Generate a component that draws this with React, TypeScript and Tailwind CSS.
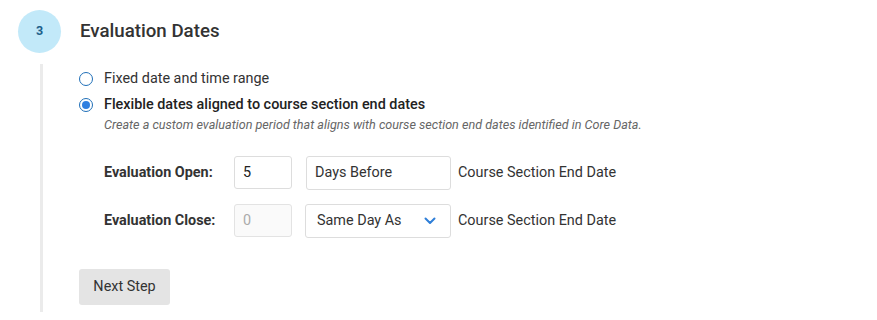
import type { FC } from 'react';

const Chevron: FC = () => (
  <svg width="12" height="8" viewBox="0 0 12 8" fill="none">
    <path d="M1.5 1.5 6 6l4.5-4.5" stroke="#2f7fd8" strokeWidth="2" strokeLinecap="round" strokeLinejoin="round" />
  </svg>
);

const Radio: FC<{ checked?: boolean }> = ({ checked }) => (
  <span className="flex size-[14px] shrink-0 items-center justify-center rounded-full border border-[#1f6fb8] bg-white">
    {checked && <span className="size-[8px] rounded-full bg-[#2f7fe0]" />}
  </span>
);

export default function App() {
  return (
    <div className="h-[320px] w-[877px] bg-white font-['Roboto',sans-serif] text-[#333]">
      <div className="flex items-center pt-[10px]">
        <div className="ml-[18px] flex size-[43px] items-center justify-center rounded-full bg-[#c2e9f9] text-[12.5px] font-bold text-[#1d5f8a]">
          3
        </div>
        <h2 className="ml-[19px] text-[18.7px] font-medium text-[#333]">Evaluation Dates</h2>
      </div>

      <div className="ml-[40px] mt-[11px] flex h-[248px] border-l-[3px] border-[#ebebeb]">
        <div className="flex flex-col pl-[36px] pt-[2px]">
          <label className="flex h-[26px] items-center gap-[11px] text-[14.4px] text-[#333]">
            <Radio />
            Fixed date and time range
          </label>
          <label className="flex h-[26px] items-center gap-[11px] text-[14.4px] font-medium text-[#222]">
            <Radio checked />
            Flexible dates aligned to course section end dates
          </label>
          <p className="ml-[25px] -mt-[2px] text-[12.6px] italic text-[#666]">
            Create a custom evaluation period that aligns with course section end dates identified in Core Data.
          </p>

          <div className="ml-[25px] mt-[21px] grid grid-cols-[130px_72px_152px_auto] items-center gap-y-[14px] text-[14.4px]">
            <span className="font-bold text-[#333]">Evaluation Open:</span>
            <input
              readOnly
              value="5"
              className="h-[33px] w-[58px] rounded-[3px] border border-[#ddd] px-[8px] text-[14.4px] text-[#222] outline-none"
            />
            <div className="flex h-[34px] w-[145px] items-center rounded-[3px] border border-[#ddd] px-[8px] text-[#333]">
              Days Before
            </div>
            <span className="text-[#333]">Course Section End Date</span>

            <span className="font-bold text-[#333]">Evaluation Close:</span>
            <input
              readOnly
              disabled
              value="0"
              className="h-[33px] w-[58px] rounded-[3px] border border-[#e3e3e3] bg-[#fafafa] px-[8px] text-[14.4px] text-[#aaa] outline-none"
            />
            <div className="-ml-[1px] flex h-[34px] w-[146px] items-center justify-between rounded-[3px] border border-[#ddd] pl-[11px] pr-[14px] text-[#333]">
              Same Day As
              <Chevron />
            </div>
            <span className="text-[#333]">Course Section End Date</span>
          </div>

          <button className="mt-[31px] h-[36px] w-[91px] rounded-[3px] bg-[#e4e4e4] text-[14.4px] text-[#333]">
            Next Step
          </button>
        </div>
      </div>
    </div>
  );
}
